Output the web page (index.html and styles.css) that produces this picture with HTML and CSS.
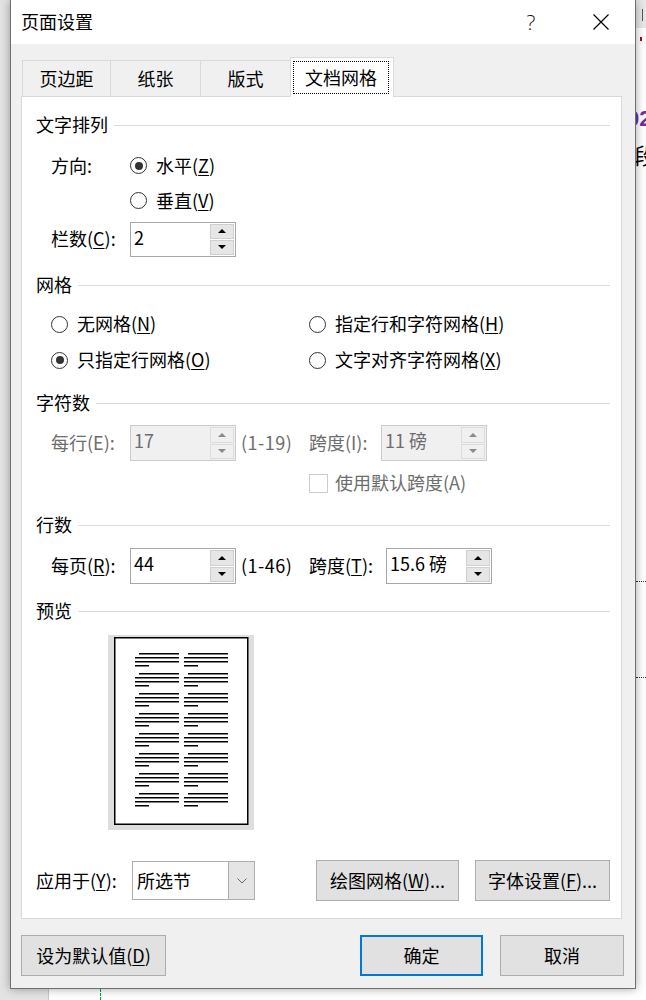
FILE: index.html
```html
<!DOCTYPE html>
<html lang="zh-CN">
<head>
<meta charset="utf-8">
<title>页面设置</title>
<link rel="stylesheet" href="styles.css">
</head>
<body>
<div class="screen">
  <div class="top">
    <div class="dialog">
      <div class="titlebar">
        <span class="title">页面设置</span>
        <div class="tb-btns">
          <span class="tb-btn help">?</span>
          <span class="tb-btn">
            <svg width="16" height="16" viewBox="0 0 16 16"><path d="M0.5 0.5 L15.5 15.5 M15.5 0.5 L0.5 15.5" stroke="#000" stroke-width="1.2" fill="none"/></svg>
          </span>
        </div>
      </div>
      <div class="dlg-body">
        <div class="tabs">
          <div class="tab t1">页边距</div>
          <div class="tab t2">纸张</div>
          <div class="tab t3">版式</div>
          <div class="tab active"><span class="focus">文档网格</span></div>
        </div>
        <div class="panel">
          <div class="group-title"><span>文字排列</span><i></i></div>
          <div class="row row-dir">
            <span class="label">方向:</span>
            <span class="radio checked"><i></i>水平(<u>Z</u>)</span>
          </div>
          <div class="row row-dir2">
            <span class="label"></span>
            <span class="radio"><i></i>垂直(<u>V</u>)</span>
          </div>
          <div class="row row-cols">
            <span class="label">栏数(<u>C</u>):</span>
            <div class="spin short"><span class="val">2</span><span class="spin-btns"><b class="up"></b><b class="down"></b></span></div>
          </div>

          <div class="group-title gt-grid"><span>网格</span><i></i></div>
          <div class="grid-row first">
            <span class="radio"><i></i>无网格(<u>N</u>)</span>
            <span class="radio"><i></i>指定行和字符网格(<u>H</u>)</span>
          </div>
          <div class="grid-row">
            <span class="radio checked"><i></i>只指定行网格(<u>O</u>)</span>
            <span class="radio"><i></i>文字对齐字符网格(<u>X</u>)</span>
          </div>

          <div class="group-title gt-chars"><span>字符数</span><i></i></div>
          <div class="row row-chars disabled">
            <span class="label">每行(E):</span>
            <div class="spin"><span class="val">17</span><span class="spin-btns"><b class="up"></b><b class="down"></b></span></div>
            <span class="range">(1-19)</span>
            <span class="label2">跨度(I):</span>
            <div class="spin"><span class="val">11 磅</span><span class="spin-btns"><b class="up"></b><b class="down"></b></span></div>
          </div>
          <div class="row row-check disabled">
            <span class="check"></span>使用默认跨度(A)
          </div>

          <div class="group-title gt-lines"><span>行数</span><i></i></div>
          <div class="row row-lines">
            <span class="label">每页(<u>R</u>):</span>
            <div class="spin"><span class="val">44</span><span class="spin-btns"><b class="up"></b><b class="down"></b></span></div>
            <span class="range">(1-46)</span>
            <span class="label2 wide">跨度(<u>T</u>):</span>
            <div class="spin"><span class="val">15.6 磅</span><span class="spin-btns"><b class="up"></b><b class="down"></b></span></div>
          </div>

          <div class="group-title gt-preview"><span>预览</span><i></i></div>
          <div class="preview">
            <svg width="146" height="195" viewBox="0 0 146 195">
              <defs>
                <g id="para">
                  <rect x="31" y="0" width="40" height="1.5"/>
                  <rect x="27" y="4" width="44" height="1.5"/>
                  <rect x="27" y="8" width="44" height="1.5"/>
                  <rect x="27" y="12" width="14" height="1.5"/>
                  <rect x="80" y="0" width="40" height="1.5"/>
                  <rect x="76" y="4" width="44" height="1.5"/>
                  <rect x="76" y="8" width="44" height="1.5"/>
                  <rect x="76" y="12" width="14" height="1.5"/>
                </g>
              </defs>
              <rect width="146" height="195" fill="#dedede"/>
              <rect x="6.75" y="2.75" width="133" height="186.5" fill="#fff" stroke="#000" stroke-width="1.5"/>
              <g fill="#000">
                <use href="#para" y="18"/>
                <use href="#para" y="38"/>
                <use href="#para" y="58"/>
                <use href="#para" y="78"/>
                <use href="#para" y="98"/>
                <use href="#para" y="118"/>
                <use href="#para" y="138"/>
                <use href="#para" y="158"/>
              </g>
            </svg>
          </div>

          <div class="apply">
            <span class="apply-label">应用于(<u>Y</u>):</span>
            <div class="combo">
              <span class="val">所选节</span>
              <span class="drop"><svg width="10" height="6" viewBox="0 0 10 6"><polyline points="0.5,0.5 5,5 9.5,0.5" fill="none" stroke="#666" stroke-width="1"/></svg></span>
            </div>
            <div class="apply-btns">
              <span class="btn btn-grid">绘图网格(<u>W</u>)...</span>
              <span class="btn btn-font">字体设置(<u>F</u>)...</span>
            </div>
          </div>
        </div>
        <div class="footer">
          <span class="btn btn-setdefault">设为默认值(<u>D</u>)</span>
          <span class="btn btn-ok">确定</span>
          <span class="btn btn-cancel">取消</span>
        </div>
      </div>
    </div>
    <div class="rstrip">
      <div class="rs-ribbon"><span class="rs-bar"></span></div>
      <div class="rs-red"></div>
      <div class="rs-num">02</div>
      <div class="rs-char">段</div>
      <div class="rs-dots first"></div>
      <div class="rs-dots"></div>
    </div>
  </div>
  <div class="bottom">
    <div class="guide"></div>
  </div>
</div>
</body>
</html>
```

FILE: styles.css
```css
html, body {
  margin: 0;
  padding: 0;
}

body {
  width: 646px;
  height: 1000px;
  overflow: hidden;
  font-family: "Noto Sans CJK SC", "Noto Sans", sans-serif;
  font-size: 18px;
  line-height: 1.2;
  color: #000;
  background: linear-gradient(to right, #e3e3e3 0, #e3e3e3 48px, #c9c9c9 48px, #c9c9c9 49px, #ffffff 49px);
}

.screen {
  display: flex;
  flex-direction: column;
  height: 1000px;
}

.top {
  display: flex;
  padding-left: 10px;
}

u {
  text-decoration: underline;
  text-underline-offset: 2px;
  text-decoration-thickness: 1px;
}

/* ---------- dialog ---------- */
.dialog {
  width: 626px;
  flex: none;
  box-sizing: border-box;
  border: 1px solid #6f6f6f;
  border-top: 0;
  background: #f0f0f0;
  box-shadow: 0 0 9px rgba(0, 0, 0, 0.35);
  position: relative;
  z-index: 1;
}

.titlebar {
  height: 44px;
  background: #fff;
  display: flex;
  align-items: center;
  padding-left: 10px;
}

.title {
  flex: 1;
}

.tb-btns {
  display: flex;
  gap: 24px;
  margin-right: 11px;
}

.tb-btn {
  width: 46px;
  height: 44px;
  display: flex;
  align-items: center;
  justify-content: center;
}

.help {
  font-family: "Open Sans", "Noto Sans", sans-serif;
  font-size: 21px;
  font-weight: 300;
  color: #111;
  padding-top: 1px;
  box-sizing: border-box;
}

.dlg-body {
  padding: 13px 0 12px 10px;
}

/* ---------- tabs ---------- */
.tabs {
  display: flex;
  align-items: flex-end;
  margin-left: 1px;
}

.tab {
  height: 36px;
  box-sizing: border-box;
  border-top: 1px solid #d9d9d9;
  border-left: 1px solid #d9d9d9;
  display: flex;
  align-items: center;
  justify-content: center;
}

.t1 { width: 88px; }
.t2, .t3 { width: 90px; }

.tab.active {
  width: 104px;
  height: 40px;
  background: #fff;
  border: 1px solid #d9d9d9;
  border-bottom: 0;
  margin-bottom: -1px;
  position: relative;
  z-index: 1;
  padding: 3px 4px 3px 2px;
  align-items: stretch;
}

.focus {
  flex: 1;
  border: 1px dotted #000;
  display: flex;
  align-items: center;
  justify-content: center;
  padding-top: 1px;
}

/* ---------- panel ---------- */
.panel {
  width: 601px;
  box-sizing: border-box;
  background: #fff;
  border: 1px solid #d9d9d9;
  padding: 16px 11px 17px 14px;
}

.group-title {
  height: 24px;
  display: flex;
  align-items: center;
  gap: 6px;
}

.group-title i {
  flex: 1;
  height: 1px;
  background: #dadada;
}

.gt-grid { margin-top: 16px; }
.gt-chars { margin-top: 13px; }
.gt-lines { margin-top: 18px; }
.gt-preview { margin-top: 15px; }

.row {
  display: flex;
  align-items: center;
  padding-left: 15px;
}

.label {
  width: 79px;
  flex: none;
}

.row-dir { margin-top: 11px; height: 35px; }
.row-dir2 { height: 35px; }
.row-cols { margin-top: 3px; height: 36px; }
.row-chars { margin-top: 10px; height: 36px; }
.row-check { margin-top: 10px; height: 24px; padding-left: 273px; }
.row-lines { margin-top: 11px; height: 36px; }

.disabled {
  color: #6d6d6d;
}

.radio {
  display: flex;
  align-items: center;
}

.radio i {
  width: 17px;
  height: 17px;
  box-sizing: border-box;
  border: 1px solid #333;
  border-radius: 50%;
  background: #fff;
  margin-right: 9px;
  display: flex;
  align-items: center;
  justify-content: center;
  flex: none;
}

.radio.checked i::after {
  content: "";
  width: 8px;
  height: 8px;
  border-radius: 50%;
  background: #333;
}

.grid-row {
  display: grid;
  grid-template-columns: 258px 1fr;
  align-items: center;
  padding-left: 15px;
  height: 36px;
}

.grid-row.first { margin-top: 9px; }

/* spin boxes */
.spin {
  width: 106px;
  height: 36px;
  flex: none;
  box-sizing: border-box;
  border: 1px solid #a8a8a8;
  background: #fff;
  display: flex;
}

.spin.short { height: 35px; }

.spin .val {
  flex: 1;
  padding-left: 3px;
  line-height: 28px;
}

.spin-btns {
  width: 24px;
  margin: 1px;
  display: flex;
  flex-direction: column;
  gap: 1px;
}

.spin-btns b {
  flex: 1;
  background: #e6e6e6;
  border: 1px solid #cfcfcf;
  display: flex;
  align-items: center;
  justify-content: center;
}

.spin-btns b::after {
  content: "";
  width: 0;
  height: 0;
  border-left: 4px solid transparent;
  border-right: 4px solid transparent;
}

.spin-btns b.up::after { border-bottom: 4px solid #000; }
.spin-btns b.down::after { border-top: 4px solid #000; }

.disabled .spin {
  border-color: #cccccc;
  background: #f0f0f0;
}

.disabled .spin-btns b {
  background: #f0f0f0;
  border-color: #dcdcdc;
}

.disabled .spin-btns b.up::after { border-bottom-color: #8a8a8a; }
.disabled .spin-btns b.down::after { border-top-color: #8a8a8a; }

.range {
  width: 68px;
  margin-left: 5px;
  flex: none;
  letter-spacing: 0.5px;
}

.label2 {
  width: 72px;
  flex: none;
}

.label2.wide { width: 77px; }

.check {
  width: 19px;
  height: 19px;
  box-sizing: border-box;
  border: 1px solid #cccccc;
  background: #fff;
  margin-right: 7px;
}

/* preview */
.preview {
  margin-top: 12px;
  margin-left: 72px;
  height: 195px;
}

.preview svg {
  display: block;
}

/* apply row */
.apply {
  margin-top: 30px;
  height: 41px;
  display: flex;
  align-items: center;
}

.apply-label {
  width: 96px;
  flex: none;
}

.combo {
  width: 123px;
  height: 39px;
  box-sizing: border-box;
  border: 1px solid #adadad;
  background: #fff;
  display: flex;
}

.combo .val {
  flex: 1;
  padding-left: 4px;
  display: flex;
  align-items: center;
}

.combo .drop {
  width: 25px;
  background: #e5e5e5;
  border-left: 1px solid #adadad;
  display: flex;
  align-items: center;
  justify-content: center;
}

.apply-btns {
  margin-left: auto;
  display: flex;
  gap: 16px;
}

.btn {
  height: 41px;
  box-sizing: border-box;
  border: 1px solid #adadad;
  background: #e1e1e1;
  display: flex;
  align-items: center;
  justify-content: center;
  flex: none;
}

.btn-grid { width: 143px; }
.btn-font { width: 135px; }

/* footer */
.footer {
  margin-top: 16px;
  padding-right: 11px;
  display: flex;
  gap: 17px;
}

.btn-setdefault {
  width: 145px;
  margin-right: auto;
}

.btn-ok {
  width: 123px;
  border: 2px solid #0078d7;
}

.btn-cancel {
  width: 124px;
}

/* ---------- document behind ---------- */
.rstrip {
  width: 10px;
  flex: none;
  overflow: hidden;
  background: #fff;
}

.rs-ribbon {
  height: 28px;
  background: #e8e8e8;
  display: flex;
}

.rs-bar {
  width: 1px;
  height: 12px;
  margin: 9px 0 0 6px;
  background: #555;
}

.rs-red {
  width: 2px;
  height: 4px;
  margin: 9px 0 0 4px;
  background: #c00000;
}

.rs-num {
  margin: 66px 0 0 -9px;
  font-family: "Liberation Sans", sans-serif;
  font-weight: bold;
  font-size: 22px;
  line-height: 24px;
  color: #7030a0;
  white-space: nowrap;
}

.rs-char {
  margin-top: 10px;
  margin-left: -2px;
  font-size: 22px;
  line-height: 26px;
  white-space: nowrap;
}

.rs-dots {
  height: 0;
  border-top: 1px dotted #333;
}

.rs-dots.first {
  margin-top: 414px;
}

.rs-dots + .rs-dots {
  margin-top: 95px;
}

.bottom {
  flex: 1;
}

.guide {
  margin-left: 100px;
  width: 0;
  height: 100%;
  border-left: 1px dashed #00a040;
}
```
